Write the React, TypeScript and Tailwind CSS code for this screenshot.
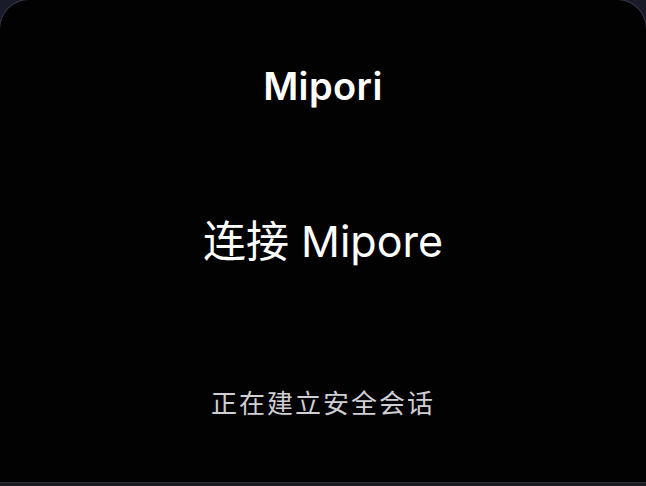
export default function App() {
  return (
    <div className="h-[486px] w-[646px] overflow-hidden bg-[#1a1b29]">
      <div className="-mx-px -mt-px flex h-[483px] flex-col items-center rounded-t-[30px] border border-b-0 border-[#34374f] bg-[#020203] text-white [font-family:Inter,'Noto_Sans_CJK_SC',sans-serif]">
        <h1 className="mt-[64px] text-[38px] font-semibold leading-[44px] tracking-[0.4px]">Mipori</h1>
        <p className="mt-[107px] text-[43px] leading-[52px]">连接 Mipore</p>
        <p className="mt-[119px] text-[26px] tracking-[2px] leading-[36px] text-[#cfcfd4]">正在建立安全会话</p>
      </div>
      <div className="h-[3px] border-t border-[#2c2c38] bg-[#1c1c24]" />
    </div>
  );
}
